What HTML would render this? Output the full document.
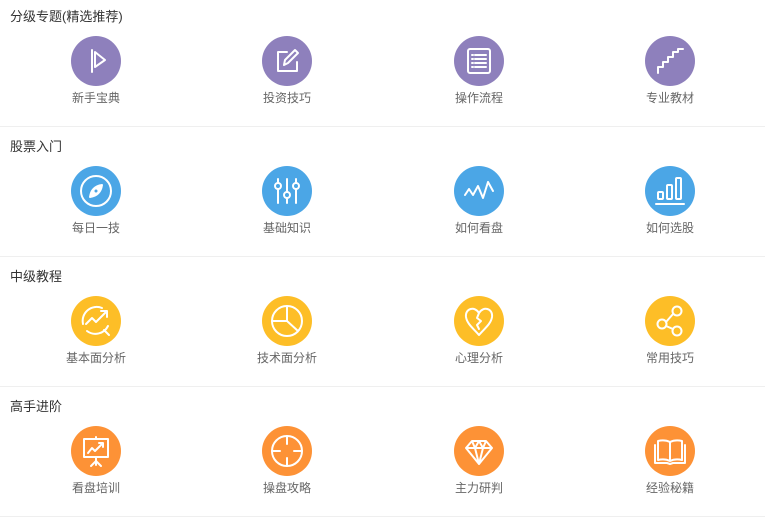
<!DOCTYPE html>
<html><head><meta charset="utf-8"><style>
*{margin:0;padding:0;box-sizing:border-box}
body{width:765px;height:517px;background:#fff;font-family:"Liberation Sans","Noto Sans CJK SC",sans-serif;position:relative;overflow:hidden}
.sec{position:absolute;left:0;width:765px;height:130px}
.sec:after{content:"";position:absolute;left:0;top:126px;width:765px;height:1px;background:#efefef}
.t{position:absolute;left:10px;top:8px;font-size:13px;color:#333;line-height:18px}
.c{position:absolute;top:36px;width:120px;margin-left:-60px;text-align:center}
.c svg{display:block;margin:0 auto;width:50px;height:50px}
.c span{display:block;margin-top:4px;font-size:12px;color:#666;line-height:16px}
svg *{fill:none;stroke:#fff;stroke-width:2;stroke-linecap:round;stroke-linejoin:round}
svg circle.bg{stroke:none}
</style></head><body>

<div class="sec" style="top:0">
<div class="t">分级专题(精选推荐)</div>
<div class="c" style="left:96px"><svg viewBox="0 0 50 50"><circle class="bg" cx="25" cy="25" r="25" style="fill:#8e80bc"/><path d="M21 14V36M24 16L34 24L24 31Z"/></svg><span>新手宝典</span></div>
<div class="c" style="left:287px"><svg viewBox="0 0 50 50"><circle class="bg" cx="25" cy="25" r="25" style="fill:#8e80bc"/><path d="M25 16H16V35H35V26M22 29L23 24L33 14L36 17L26 27Z"/></svg><span>投资技巧</span></div>
<div class="c" style="left:479px"><svg viewBox="0 0 50 50"><circle class="bg" cx="25" cy="25" r="25" style="fill:#8e80bc"/><rect x="14" y="13" width="22" height="24" rx="2"/><path d="M18 19H19M21 19H32M18 23H19M21 23H32M18 27H19M21 27H32M18 31H19M21 31H32" stroke-width="1.5"/></svg><span>操作流程</span></div>
<div class="c" style="left:670px"><svg viewBox="0 0 50 50"><circle class="bg" cx="25" cy="25" r="25" style="fill:#8e80bc"/><path d="M13 37V31H18V26H23V21H28V16H33V13H38" stroke-linecap="butt" stroke-linejoin="miter"/></svg><span>专业教材</span></div>
</div>

<div class="sec" style="top:130px">
<div class="t">股票入门</div>
<div class="c" style="left:96px"><svg viewBox="0 0 50 50"><circle class="bg" cx="25" cy="25" r="25" style="fill:#4ba6e6"/><circle cx="25" cy="25" r="15"/><path d="M19 31C20 24 24 20 31 19C30 26 26 30 19 31Z" style="fill:#fff"/><circle cx="25" cy="25" r="1.5" style="fill:#4ba6e6;stroke:none"/></svg><span>每日一技</span></div>
<div class="c" style="left:287px"><svg viewBox="0 0 50 50"><circle class="bg" cx="25" cy="25" r="25" style="fill:#4ba6e6"/><path d="M16 13V17M16 23V37M25 13V26M25 32V37M34 13V17M34 23V37"/><circle cx="16" cy="20" r="3"/><circle cx="25" cy="29" r="3"/><circle cx="34" cy="20" r="3"/></svg><span>基础知识</span></div>
<div class="c" style="left:479px"><svg viewBox="0 0 50 50"><circle class="bg" cx="25" cy="25" r="25" style="fill:#4ba6e6"/><path d="M11 29L15 23L19 29L24 20L29 32L34 16L39 25"/></svg><span>如何看盘</span></div>
<div class="c" style="left:670px"><svg viewBox="0 0 50 50"><circle class="bg" cx="25" cy="25" r="25" style="fill:#4ba6e6"/><rect x="13" y="26" width="5" height="7" rx="1"/><rect x="22" y="19" width="5" height="14" rx="1"/><rect x="31" y="12" width="5" height="21" rx="1"/><path d="M11 38H39"/></svg><span>如何选股</span></div>
</div>

<div class="sec" style="top:260px">
<div class="t">中级教程</div>
<div class="c" style="left:96px"><svg viewBox="0 0 50 50"><circle class="bg" cx="25" cy="25" r="25" style="fill:#fdbe27"/><path d="M31 12A14 14 0 0 0 12 28M16 35A14 14 0 0 0 37 30M33 34L38 39M15 28L21 22L25 26L35 16M30 15H36V21"/></svg><span>基本面分析</span></div>
<div class="c" style="left:287px"><svg viewBox="0 0 50 50"><circle class="bg" cx="25" cy="25" r="25" style="fill:#fdbe27"/><circle cx="25" cy="25" r="15"/><path d="M25 10V25H10M25 25L36 35"/></svg><span>技术面分析</span></div>
<div class="c" style="left:479px"><svg viewBox="0 0 50 50"><circle class="bg" cx="25" cy="25" r="25" style="fill:#fdbe27"/><path d="M25 17C21 10 11 12 12 21C13 28 20 33 25 39C30 33 37 28 38 21C39 12 29 10 25 17L23 22L27 25L23 29L25 33"/></svg><span>心理分析</span></div>
<div class="c" style="left:670px"><svg viewBox="0 0 50 50"><circle class="bg" cx="25" cy="25" r="25" style="fill:#fdbe27"/><circle cx="32" cy="15" r="4.5"/><circle cx="17" cy="28" r="4.5"/><circle cx="32" cy="35" r="4.5"/><path d="M21 26L28 18M21 30L28 33"/></svg><span>常用技巧</span></div>
</div>

<div class="sec" style="top:390px">
<div class="t">高手进阶</div>
<div class="c" style="left:96px"><svg viewBox="0 0 50 50"><circle class="bg" cx="25" cy="25" r="25" style="fill:#fd9236"/><path d="M25 11V13M13 13H37V31H13ZM25 31V39M20 40L25 35L30 40M17 27L21 22L24 25L32 17M28 17H32V21"/></svg><span>看盘培训</span></div>
<div class="c" style="left:287px"><svg viewBox="0 0 50 50"><circle class="bg" cx="25" cy="25" r="25" style="fill:#fd9236"/><circle cx="25" cy="25" r="15"/><path d="M25 10V18M25 32V40M10 25H18M32 25H40"/></svg><span>操盘攻略</span></div>
<div class="c" style="left:479px"><svg viewBox="0 0 50 50"><circle class="bg" cx="25" cy="25" r="25" style="fill:#fd9236"/><path d="M18 15H32L38 22L25 38L12 22ZM12 22H38M18 15L21 22L25 38L29 22L32 15M25 15L21 22M25 15L29 22"/></svg><span>主力研判</span></div>
<div class="c" style="left:670px"><svg viewBox="0 0 50 50"><circle class="bg" cx="25" cy="25" r="25" style="fill:#fd9236"/><path d="M25 16C21 14 17 14 13 15V34C17 33 21 33 25 35C29 33 33 33 37 34V15C33 14 29 14 25 16ZM25 16V35M10 19V37H22L25 38L28 37H40V19"/></svg><span>经验秘籍</span></div>
</div>

</body></html>
